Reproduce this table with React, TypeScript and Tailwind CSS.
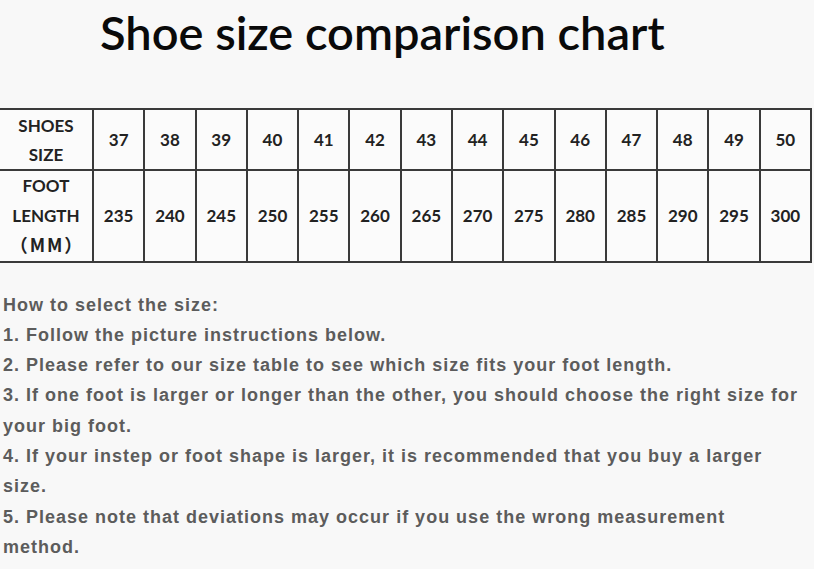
import React from "react";

const sizes = [37, 38, 39, 40, 41, 42, 43, 44, 45, 46, 47, 48, 49, 50];
const lengths = [235, 240, 245, 250, 255, 260, 265, 270, 275, 280, 285, 290, 295, 300];

const lines = [
  "How to select the size:",
  "1. Follow the picture instructions below.",
  "2. Please refer to our size table to see which size fits your foot length.",
  "3. If one foot is larger or longer than the other, you should choose the right size for",
  "your big foot.",
  "4. If your instep or foot shape is larger, it is recommended that you buy a larger",
  "size.",
  "5. Please note that deviations may occur if you use the wrong measurement",
  "method.",
];

export default function App() {
  return (
    <div className="w-[814px] h-[569px] overflow-hidden bg-[#f8f8f8] text-[#1a1a1a]">
      <div className="h-[108px] pl-[100px] pt-[2px]">
        <h1
          className="text-[47px] leading-[60px] font-semibold tracking-[0px] text-[#0a0a0a]"
          style={{ fontFamily: "Lato, 'Liberation Sans', sans-serif" }}
        >
          Shoe size comparison chart
        </h1>
      </div>
      <table
        className="-ml-[2px] w-[814px] border-collapse table-fixed bg-[#fbfbfb]"
        style={{ fontFamily: "Lato, 'Liberation Sans', sans-serif" }}
      >
        <colgroup>
          <col className="w-[94px]" />
          {sizes.map((s) => (
            <col key={s} />
          ))}
        </colgroup>
        <tbody>
          <tr className="h-[61px]">
            <td className="border-2 border-[#3a3a3a] text-center font-bold text-[17px] leading-[29px] text-[#222]">
              SHOES
              <br />
              SIZE
            </td>
            {sizes.map((s) => (
              <td
                key={s}
                className="border-2 border-[#3a3a3a] text-center font-bold text-[17px] text-[#222]"
              >
                {s}
              </td>
            ))}
          </tr>
          <tr className="h-[91px]">
            <td className="border-2 border-[#3a3a3a] text-center font-bold text-[17px] leading-[29.5px] text-[#222]">
              FOOT
              <br />
              LENGTH
              <br />
              <span
                className="inline-block pl-[2px] text-[18px] tracking-[2px]"
                style={{ fontFamily: "'Noto Sans CJK SC', sans-serif" }}
              >
                （MM）
              </span>
            </td>
            {lengths.map((l) => (
              <td
                key={l}
                className="border-2 border-[#3a3a3a] text-center font-bold text-[17px] text-[#222]"
              >
                {l}
              </td>
            ))}
          </tr>
        </tbody>
      </table>
      <div
        className="pl-[3px] pt-[27px] text-[18px] leading-[30.3px] font-bold tracking-[1px] text-[#5c5c5c]"
        style={{ fontFamily: "'Liberation Sans', Arial, sans-serif" }}
      >
        {lines.map((t, i) => (
          <div key={i} className="whitespace-nowrap">
            {t}
          </div>
        ))}
      </div>
    </div>
  );
}
